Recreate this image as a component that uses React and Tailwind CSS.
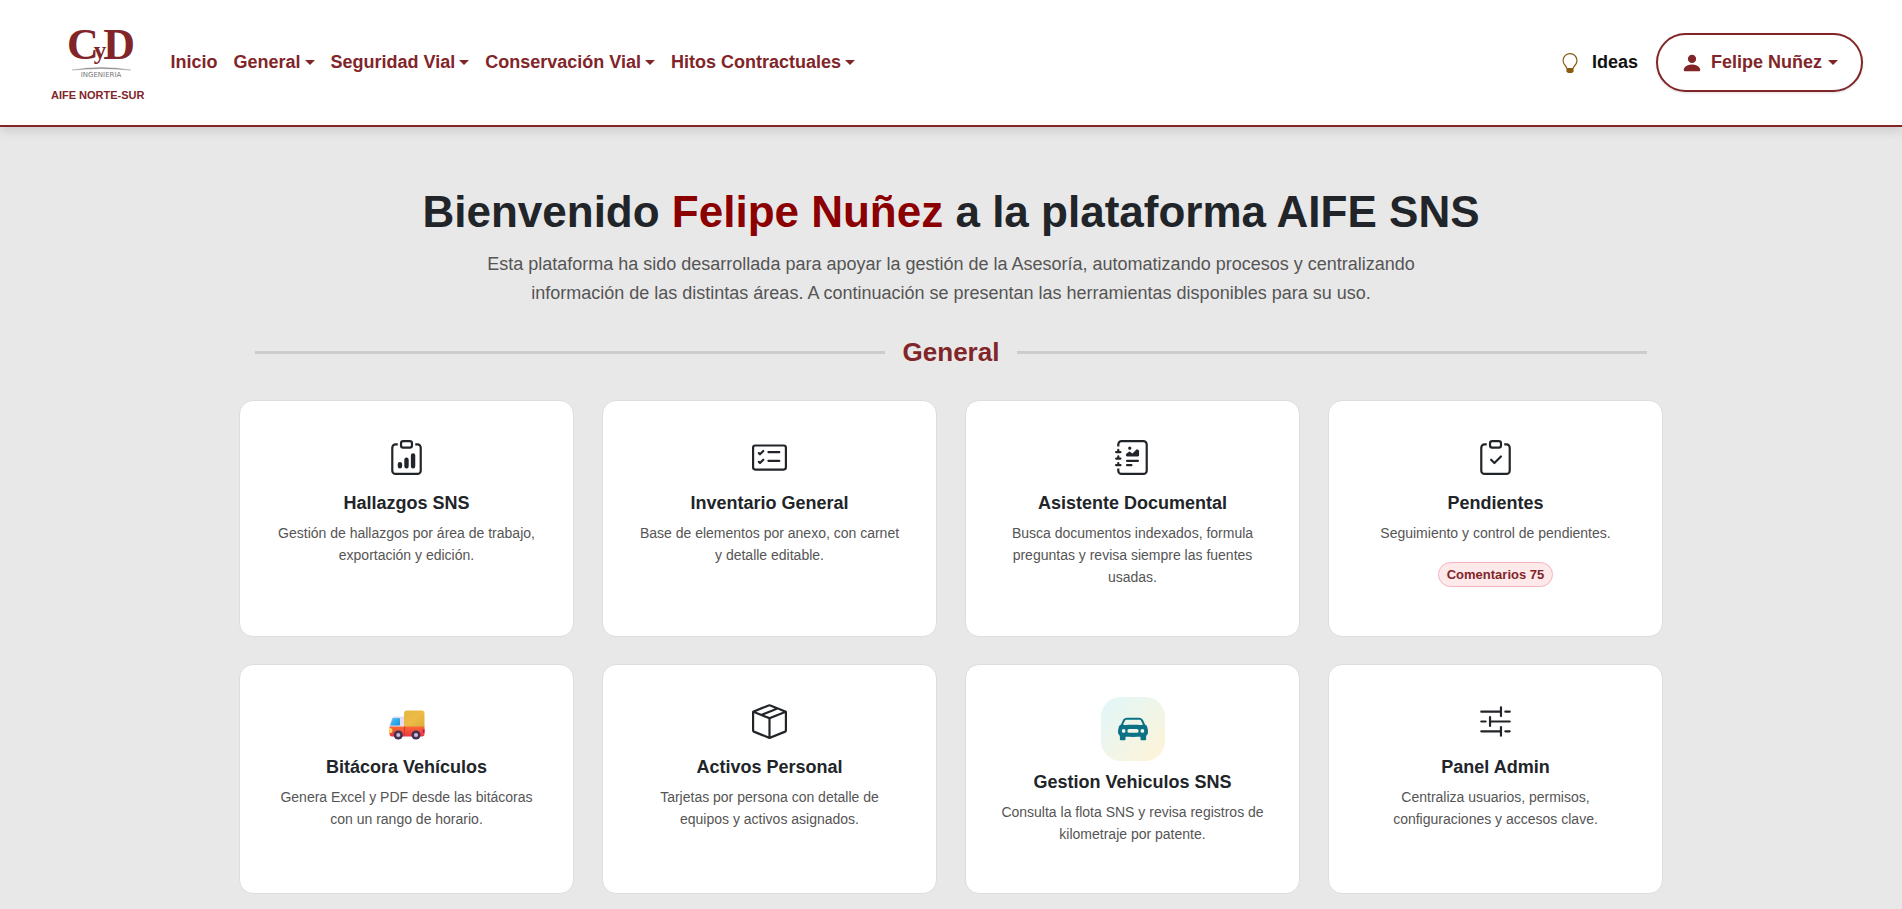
import React from 'react';
import {
  BsBoxSeam,
  BsCarFrontFill,
  BsCardChecklist,
  BsClipboardCheck,
  BsClipboardData,
  BsJournalRichtext,
  BsLightbulb,
  BsPersonFill,
  BsSliders2,
} from 'react-icons/bs';

const menus = ['General', 'Seguridad Vial', 'Conservación Vial', 'Hitos Contractuales'];

const tools = [
  { title: 'Hallazgos SNS', text: 'Gestión de hallazgos por área de trabajo, exportación y edición.', icon: <BsClipboardData size={35} /> },
  { title: 'Inventario General', text: 'Base de elementos por anexo, con carnet y detalle editable.', icon: <BsCardChecklist size={35} /> },
  { title: 'Asistente Documental', text: 'Busca documentos indexados, formula preguntas y revisa siempre las fuentes usadas.', icon: <BsJournalRichtext size={35} /> },
  { title: 'Pendientes', text: 'Seguimiento y control de pendientes.', icon: <BsClipboardCheck size={35} />, badge: 'Comentarios 75' },
  { title: 'Bitácora Vehículos', text: 'Genera Excel y PDF desde las bitácoras con un rango de horario.', icon: <Truck /> },
  { title: 'Activos Personal', text: 'Tarjetas por persona con detalle de equipos y activos asignados.', icon: <BsBoxSeam size={35} /> },
  { title: 'Gestion Vehiculos SNS', text: 'Consulta la flota SNS y revisa registros de kilometraje por patente.', icon: <BsCarFrontFill size={30} />, tile: true },
  { title: 'Panel Admin', text: 'Centraliza usuarios, permisos, configuraciones y accesos clave.', icon: <BsSliders2 size={35} /> },
];

export default function App() {
  return (
    <div className="min-h-screen bg-[#e8e8e8] font-['Liberation_Sans',Arial,sans-serif] text-[#212529]">
      <Navbar />

      <main className="max-w-[1424px] mx-auto pt-[59px] pb-3">
        {/* Bienvenida */}
        <section className="text-center">
          <h1 className="text-[44px] leading-[52px] font-bold mb-3">
            Bienvenido <span className="text-[#8b0000]">Felipe Nuñez</span> a la plataforma AIFE SNS
          </h1>
          <p className="max-w-[1000px] mx-auto text-[18px] leading-[29px] text-[#555]">
            Esta plataforma ha sido desarrollada para apoyar la gestión de la Asesoría, automatizando procesos y
            centralizando información de las distintas áreas. A continuación se presentan las herramientas disponibles
            para su uso.
          </p>
        </section>

        {/* Separador de sección */}
        <div className="flex items-center gap-[18px] px-4 mt-7 mb-8">
          <span className="flex-1 h-[3px] bg-[#ccc]"></span>
          <h2 className="text-[26px] leading-8 font-bold text-[#812529]">General</h2>
          <span className="flex-1 h-[3px] bg-[#ccc]"></span>
        </div>

        <div className="grid grid-cols-1 sm:grid-cols-2 lg:grid-cols-4 gap-x-7 gap-y-[27px]">
          {tools.map((tool) => (
            <ToolCard key={tool.title} {...tool} />
          ))}
        </div>
      </main>
    </div>
  );
}

function Navbar() {
  return (
    <header className="relative flex items-center justify-between h-[127px] pl-[51px] pr-[39px] bg-white border-b-2 border-[#812529] shadow-[0_4px_10px_rgba(0,0,0,0.12)] text-[18px] font-bold text-[#812529]">
      <div className="flex items-center">
        <a href="#" className="flex flex-col items-center mr-[26px] pt-1">
          <Logo />
          <span className="text-[11px] leading-4 mt-2">AIFE NORTE-SUR</span>
        </a>
        <nav className="flex items-center gap-4">
          <a href="#">Inicio</a>
          {menus.map((menu) => (
            <button key={menu} type="button" className="flex items-center gap-1 font-bold">
              {menu} <Caret />
            </button>
          ))}
        </nav>
      </div>

      <div className="flex items-center gap-[18px]">
        <a href="#" className="flex items-center gap-3 text-[#111]">
          <BsLightbulb size={20} className="text-[#8a5a12]" />
          Ideas
        </a>
        <button type="button" className="flex items-center h-[59px] px-[23px] border-2 border-[#812529] rounded-full bg-white font-bold shadow-sm">
          <BsPersonFill size={22} className="mr-2" />
          Felipe Nuñez
          <span className="ml-1.5"><Caret /></span>
        </button>
      </div>
    </header>
  );
}

function Caret() {
  return <span className="block border-x-[5px] border-x-transparent border-t-[5px] border-t-current"></span>;
}

function ToolCard({ icon, title, text, badge, tile }) {
  return (
    <a href="#" className="flex flex-col items-center px-8 pt-8 pb-12 bg-white border border-[#ddd] rounded-[14px] text-center">
      {tile ? (
        <div className="flex items-center justify-center w-16 h-16 mb-2.5 rounded-[20px] bg-linear-135 from-[#e0f7fa] to-[#fff3d6] text-[#0b7285]">
          {icon}
        </div>
      ) : (
        <div className="flex items-center justify-center h-[49px] mb-2.5">{icon}</div>
      )}
      <h3 className="text-[18px] leading-[22px] font-bold mb-2">{title}</h3>
      <p className="text-[14px] leading-[22px] text-[#555]">{text}</p>
      {badge && (
        <span className="mt-[18px] px-2 py-px border border-[#f5b5be] rounded-full bg-[#fde8ea] text-[13px] leading-[21px] font-bold text-[#812529]">
          {badge}
        </span>
      )}
    </a>
  );
}

function Logo() {
  return (
    <svg width="92" height="52" viewBox="0 0 92 52" role="img" aria-label="CyD Ingenieria" className="overflow-visible">
      <text x="15" y="32" fontSize="44" fontWeight="bold" fill="#812529" fontFamily="Liberation Serif, serif">
        C<tspan dx="-5" fontSize="25">y</tspan><tspan dx="-3">D</tspan>
      </text>
      <path d="M20 43 Q49 38 79 43 Q49 40 20 43Z" fill="#777" stroke="#999" strokeWidth="0.4" />
      <text x="49" y="50" fontSize="7" fontWeight="normal" textAnchor="middle" fill="#777" fontFamily="DejaVu Sans, sans-serif">INGENIERIA</text>
    </svg>
  );
}

function Truck() {
  return (
    <svg width="36" height="36" viewBox="0 -6 36 36">
      <defs>
        <linearGradient id="cargo" x1="0" y1="0" x2="1" y2="1">
          <stop offset="0" stopColor="#e3b73f" />
          <stop offset="0.5" stopColor="#edbb46" />
          <stop offset="1" stopColor="#dcae3c" />
        </linearGradient>
        <linearGradient id="chassis" x1="0" y1="0" x2="0" y2="1">
          <stop offset="0" stopColor="#fb6a35" />
          <stop offset="1" stopColor="#ee3440" />
        </linearGradient>
        <linearGradient id="glass" x1="0" y1="0" x2="1" y2="1">
          <stop offset="0" stopColor="#56c8f5" />
          <stop offset="1" stopColor="#1590dd" />
        </linearGradient>
      </defs>
      {/* Cabina y carga */}
      <path d="M5 6.5H15V17H0.5V15L3 8Q3.6 6.5 5 6.5Z" fill="#e4dcef" />
      <path d="M4.6 8H10Q11 8 11 9V14.5Q11 15.5 10 15.5H1.2L3.3 9Q3.7 8 4.6 8Z" fill="url(#glass)" />
      <path d="M18 0.5H32.5Q35.5 0.5 35.5 3.5V17H15V3.5Q15 0.5 18 0.5Z" fill="url(#cargo)" />
      {/* Chasis */}
      <path d="M0.5 16.5H35.5V24Q35.5 26.5 33 26.5H3Q0.5 26.5 0.5 24Z" fill="url(#chassis)" />
      <path d="M15 16.5H16V26H15Z" fill="#c93a35" />
      <path d="M0.5 18H1.5Q3.5 18.5 3.5 20.7Q3.5 23 1.5 23H0.5Z" fill="#ffdf4d" />
      <path d="M35.5 19H34.8Q33.3 19.5 33.3 21Q33.3 22.8 34.8 23H35.5Z" fill="#c9125c" />
      {/* Ruedas */}
      <circle cx="9.3" cy="25" r="4.6" fill="#45304f" />
      <circle cx="9.3" cy="25" r="2" fill="#cfbfdf" />
      <circle cx="27" cy="25" r="4.6" fill="#45304f" />
      <circle cx="27" cy="25" r="2" fill="#cfbfdf" />
    </svg>
  );
}
